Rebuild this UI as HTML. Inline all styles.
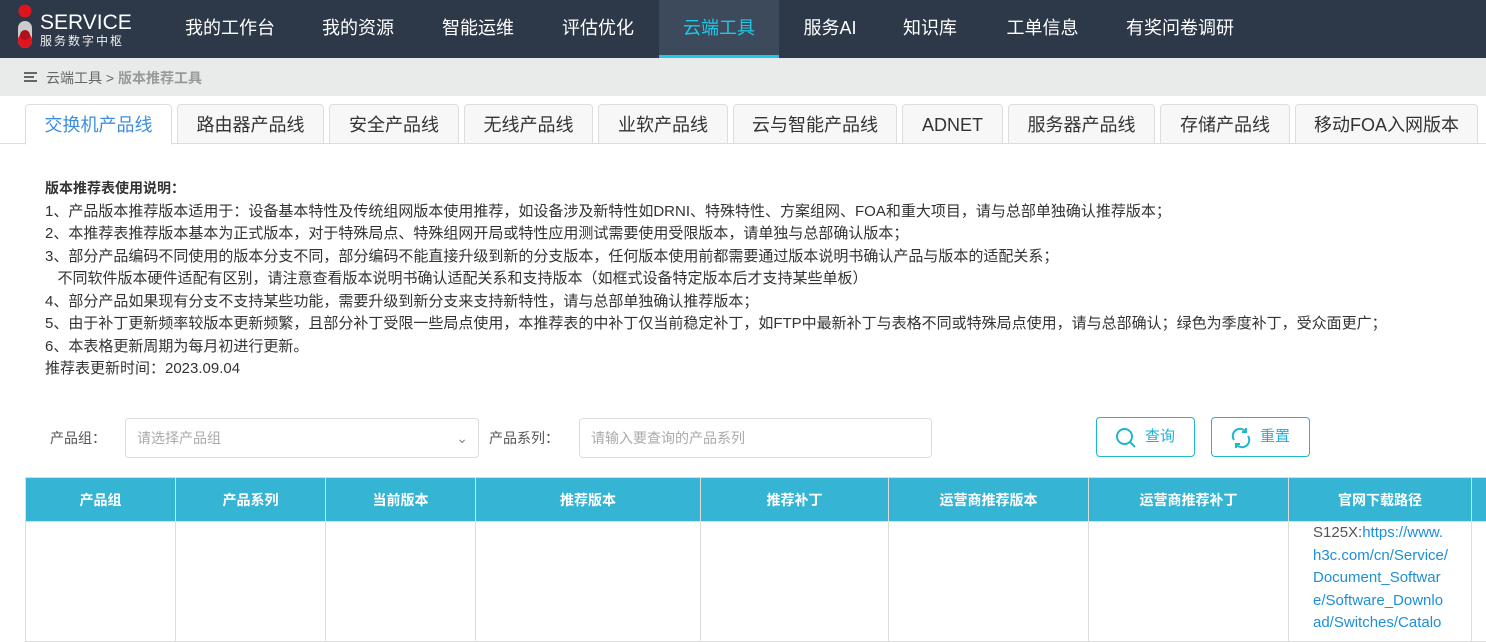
<!DOCTYPE html><html><head><meta charset="utf-8"><style>
*{margin:0;padding:0;box-sizing:border-box}
body{width:1486px;height:622px;overflow:hidden;background:#fff;font-family:"Liberation Sans","Noto Sans CJK SC",sans-serif;position:relative}
.hd{position:absolute;left:0;top:0;width:1486px;height:58px;background:#2d3849}
.nav{position:absolute;top:0;height:58px;line-height:56px;color:#fff;font-size:18px;text-align:center}
.act{background:#3c4a5c;color:#1fc8e6;border-bottom:3px solid #1fc8e6}
.bc{position:absolute;top:58px;left:0;width:1486px;height:38px;background:#e9eaea;font-size:14px;color:#666;line-height:40px;padding-left:46px}
.tab{position:absolute;top:104px;height:40px;border:1px solid #ddd;border-radius:4px 4px 0 0;background:#f7f7f7;font-size:18px;color:#333;text-align:center;line-height:40px}
.tl{position:absolute;left:0;top:143px;width:1486px;border-top:1px solid #ddd}
.txt{position:absolute;left:45px;top:177px;font-size:15px;color:#333;line-height:22.5px;white-space:nowrap}
.lbl{position:absolute;font-size:14px;color:#555}
.inp{position:absolute;top:418px;height:40px;border:1px solid #ddd;border-radius:4px;font-size:14px;color:#aaa;line-height:38px;padding-left:11px}
.btn{position:absolute;top:417px;height:40px;width:99px;border:1px solid #1fb6d0;border-radius:4px;color:#1fb0d8;font-size:15px;line-height:38px;padding-left:48px}
table{position:absolute;left:25px;top:477px;border-collapse:collapse;table-layout:fixed;width:1476px}
th{background:#35b4d4;color:#fff;font-size:14px;height:44px;border:1px solid #ddd;font-weight:bold}
td{border:1px solid #ddd;vertical-align:top;height:120px;font-size:15px;line-height:22.5px;padding:4px 22px;color:#555;white-space:nowrap}
a{color:#1e8fd6;text-decoration:none}
</style></head><body>
<div class="hd">
<svg style="position:absolute;left:17px;top:3px" width="18" height="46"><circle cx="8" cy="8" r="6.5" fill="#e0141e"/><rect x="1" y="18" width="14" height="27" rx="7" fill="#ccc"/><rect x="1" y="30" width="14" height="15" rx="7" fill="#e0141e"/><circle cx="8" cy="32" r="5" fill="#b0101a"/></svg>
<div style="position:absolute;left:40px;top:13px;color:#fff;font-size:21px;line-height:20px">SERVICE</div>
<div style="position:absolute;left:40px;top:32px;color:#eee;font-size:12px;letter-spacing:2px">服务数字中枢</div>
<div class="nav" style="left:170px;width:120px">我的工作台</div>
<div class="nav" style="left:308px;width:100px">我的资源</div>
<div class="nav" style="left:428px;width:100px">智能运维</div>
<div class="nav" style="left:548px;width:100px">评估优化</div>
<div class="nav act" style="left:659px;width:120px">云端工具</div>
<div class="nav" style="left:790px;width:80px">服务AI</div>
<div class="nav" style="left:890px;width:80px">知识库</div>
<div class="nav" style="left:1000px;width:85px">工单信息</div>
<div class="nav" style="left:1110px;width:140px">有奖问卷调研</div>
</div>
<div class="bc"><svg style="position:absolute;left:24px;top:14px" width="13" height="12"><rect y="0" width="13" height="2" fill="#666"/><rect y="4" width="10" height="2" fill="#666"/><rect y="8" width="13" height="2" fill="#666"/></svg>云端工具 &gt; <b style="color:#999">版本推荐工具</b></div>
<div class="tl"></div>
<div class="tab" style="left:25px;width:147px;background:#fff;color:#3c8ede;border-bottom-color:#fff;height:41px">交换机产品线</div>
<div class="tab" style="left:177px;width:147px">路由器产品线</div>
<div class="tab" style="left:329px;width:130px">安全产品线</div>
<div class="tab" style="left:464px;width:129px">无线产品线</div>
<div class="tab" style="left:598px;width:130px">业软产品线</div>
<div class="tab" style="left:733px;width:164px">云与智能产品线</div>
<div class="tab" style="left:902px;width:101px">ADNET</div>
<div class="tab" style="left:1008px;width:147px">服务器产品线</div>
<div class="tab" style="left:1160px;width:130px">存储产品线</div>
<div class="tab" style="left:1295px;width:183px">移动FOA入网版本</div>
<div class="txt"><b style="font-size:14px">版本推荐表使用说明：</b><br>1、产品版本推荐版本适用于：设备基本特性及传统组网版本使用推荐，如设备涉及新特性如DRNI、特殊特性、方案组网、FOA和重大项目，请与总部单独确认推荐版本；<br>2、本推荐表推荐版本基本为正式版本，对于特殊局点、特殊组网开局或特性应用测试需要使用受限版本，请单独与总部确认版本；<br>3、部分产品编码不同使用的版本分支不同，部分编码不能直接升级到新的分支版本，任何版本使用前都需要通过版本说明书确认产品与版本的适配关系；<br>&nbsp;&nbsp;&nbsp;不同软件版本硬件适配有区别，请注意查看版本说明书确认适配关系和支持版本（如框式设备特定版本后才支持某些单板）<br>4、部分产品如果现有分支不支持某些功能，需要升级到新分支来支持新特性，请与总部单独确认推荐版本；<br>5、由于补丁更新频率较版本更新频繁，且部分补丁受限一些局点使用，本推荐表的中补丁仅当前稳定补丁，如FTP中最新补丁与表格不同或特殊局点使用，请与总部确认；绿色为季度补丁，受众面更广；<br>6、本表格更新周期为每月初进行更新。<br>推荐表更新时间：2023.09.04</div>
<div class="lbl" style="left:50px;top:428px">产品组：</div>
<div class="inp" style="left:125px;width:354px">请选择产品组<span style="position:absolute;right:10px;color:#888">&#8964;</span></div>
<div class="lbl" style="left:489px;top:428px">产品系列：</div>
<div class="inp" style="left:579px;width:353px">请输入要查询的产品系列</div>
<div class="btn" style="left:1096px"><svg style="position:absolute;left:18px;top:9px" width="22" height="22" fill="none" stroke="#1fb6d0" stroke-width="2"><circle cx="9.5" cy="9.5" r="7.5"/><path d="M15 15l5 5"/></svg>查询</div>
<div class="btn" style="left:1211px"><svg style="position:absolute;left:18px;top:9px" width="22" height="22" fill="none" stroke="#1fb6d0" stroke-width="2"><path d="M4 13A7 7 0 0 1 16 5M18 9A7 7 0 0 1 6 17"/><path d="M16 1v4h-4M6 21v-4h4"/></svg>重置</div>
<table><colgroup><col style="width:150px"><col style="width:150px"><col style="width:150px"><col style="width:225px"><col style="width:188px"><col style="width:200px"><col style="width:200px"><col style="width:183px"><col style="width:30px"></colgroup>
<tr><th>产品组</th><th>产品系列</th><th>当前版本</th><th>推荐版本</th><th>推荐补丁</th><th>运营商推荐版本</th><th>运营商推荐补丁</th><th>官网下载路径</th><th></th></tr>
<tr><td></td><td></td><td></td><td></td><td></td><td></td><td></td><td style="padding:0 0 0 24px">S125X:<a>https://www.<br>h3c.com/cn/Service/<br>Document_Softwar<br>e/Software_Downlo<br>ad/Switches/Catalo</a></td><td></td></tr></table>
</body></html>
